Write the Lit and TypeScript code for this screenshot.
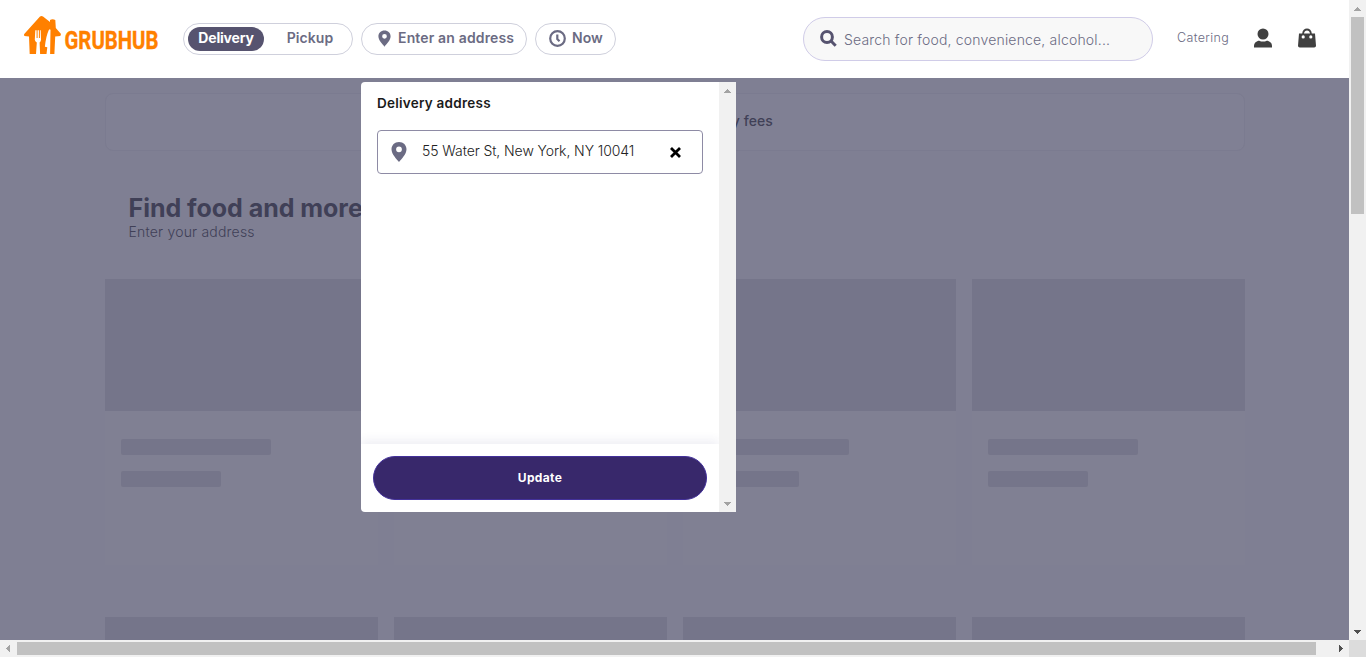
import { LitElement, html, css, svg } from "lit";
import { customElement } from "lit/decorators.js";

const pin = (cls: string) => html`<svg class=${cls} viewBox="0 0 16 20" aria-hidden="true">
  <path fill-rule="evenodd" d="M8 0C3.6 0 .5 3.2.5 7.3c0 5 5 9.700 7.500 12.700 2.500-3 7.500-7.700 7.500-12.700C15.500 3.200 12.400 0 8 0zm0 4.400a2.900 2.900 0 1 1 0 5.800 2.900 2.900 0 0 1 0-5.800z"/>
</svg>`;

const arrow = (dir: string, fill: string) => {
  const shapes: Record<string, string> = {
    up: "M5 11h7v-1h-1V9h-1V8H9V7H8v1H7v1H6v1H5z",
    down: "M5 7h7v1h-1v1h-1v1H9v1H8v-1H7V9H6V8H5z",
    left: "M10 5v7H9v-1H8v-1H7V9H6V8h1V7h1V6h1V5z",
    right: "M7 5v7h1v-1h1v-1h1V9h1V8h-1V7H9V6H8V5z",
  };
  return html`<svg class="arrow" width="17" height="17" viewBox="0 0 17 17">${svg`<path fill=${fill} d=${shapes[dir]}/>`}</svg>`;
};

@customElement("app-root")
export class AppRoot extends LitElement {
  static styles = css`
    :host { display: block; width: 1366px; height: 657px; overflow: hidden; position: relative;
      font-family: Inter, "Liberation Sans", sans-serif; background: #fff; }
    * { box-sizing: border-box; }
    svg { display: block; flex: none; }
    .window { display: grid; grid-template: 640px 17px / 1349px 17px; }
    .page { overflow: hidden; background: #7f7f93; }
    header { height: 78px; background: #fff; display: flex; align-items: center; padding: 0 32px 0 24px; color: #6b6b83; }
    .logo { width: 136px; height: 50px; margin: -3px 23px 0 0; fill: #ff8000; overflow: visible; }
    .logo-word { font: 700 26.500px Roboto, sans-serif; stroke: #ff8000; stroke-width: .4; }
    .pill { height: 32px; border: 1px solid #cfd0dc; border-radius: 16px; display: flex; align-items: center;
      font-weight: 600; font-size: 14px; line-height: 20px; margin-right: 8px; white-space: nowrap; margin-bottom: 1px; }
    .pill span { margin-top: -2px; }
    .pill .active { width: 76px; height: 24px; margin-top: 0; border-radius: 12px; background: #56536f; color: #fff; text-align: center; line-height: 22px; font-weight: 700; letter-spacing: -.2px; }
    .toggle { width: 170px; padding: 0 4px; }
    .pickup { flex: 1; text-align: center; padding-left: 8px; letter-spacing: .1px; }
    .where { width: 166px; padding-left: 16px; letter-spacing: .15px; }
    .when { width: 81px; padding-left: 14px; margin-right: 187px; }
    .pin-small { width: 13px; height: 17px; fill: #6b6b83; margin-right: 7px; }
    .clock { width: 17px; height: 17px; margin-right: 6px; margin-left: -1px; fill: none; stroke: #6b6b83; stroke-width: 2.200; }
    .search { width: 350px; height: 44px; border: 1px solid #d0cce8; border-radius: 22px; background: #f8f8f8;
      display: flex; align-items: center; padding-left: 16px; font-size: 14px; font-weight: 300; }
    .glass { width: 17px; height: 17px; margin: -1px 7px 0 0; fill: none; stroke: #56536f; stroke-width: 3; }
    .query { letter-spacing: .18px; white-space: nowrap; }
    .catering { margin: -3px 0 0 24px; width: 76px; font-size: 12.500px; font-weight: 300; letter-spacing: .35px; }
    .user { width: 20px; height: 20px; fill: #404040; margin: -2px 24px 0 0; }
    .bag { width: 20px; height: 20px; fill: #404040; margin-top: -2px; }
    .content { width: 1140px; margin: 0 0 0 105px; padding-top: 15px; color: #404057; }
    .banner { height: 58px; border-radius: 8px; background: #808094; border: 1px solid #7b7b90; display: flex;
      align-items: center; justify-content: flex-end; padding: 0 471px 3px 0; font-size: 14px; font-weight: 500; letter-spacing: .1px; }
    h1 { margin: 42px 0 0 23.500px; font-size: 25px; line-height: 31px; font-weight: 700; letter-spacing: -.03px; white-space: nowrap; }
    .sub { margin: 0 0 0 23.500px; font-size: 14px; line-height: 16px; font-weight: 300; letter-spacing: .2px; }
    .cards { display: grid; grid-template-columns: repeat(4, 273px); gap: 52px 16px; margin-top: 39px; }
    .card { height: 286px; background: #808093; }
    .photo { height: 132px; background: #75758a; margin-bottom: 28px; }
    .bar { height: 16px; width: 150px; border-radius: 2px; background: #75758a; margin: 0 0 16px 16px; }
    .short { width: 100px; }
    .vbar { background: #f1f1f1; display: flex; flex-direction: column; align-items: center; }
    .vthumb { width: 13px; height: 197px; background: #c1c1c1; }
    .hbar { background: #f1f1f1; display: flex; align-items: center; }
    .hthumb { width: 1299px; height: 13px; background: #c1c1c1; }
    .fill { flex: 1; }
    .corner { background: #dcdcdc; }
    .popup { position: absolute; left: 361px; top: 82px; width: 375px; height: 430px; display: flex; background: #fff; border-radius: 4px 0 0 4px; overflow: hidden; }
    .panel { width: 358px; display: flex; flex-direction: column; }
    .title { margin: 0; padding: 12px 16px 0; height: 48px; font-size: 13.500px; line-height: 19px; font-weight: 600; color: #1b1b1b; letter-spacing: .25px; }
    .field { width: 326px; height: 44px; margin-left: 16px; border: 1px solid #8e8ba5; border-radius: 4px; display: flex; align-items: center; padding: 0 20.500px 0 13px; }
    .pin-large { width: 16px; height: 20px; fill: #6b6b83; margin-right: 15px; }
    .address { flex: 1; font-size: 14px; font-weight: 300; color: #222; white-space: nowrap; padding-bottom: 3px; letter-spacing: -.08px; }
    .clear { width: 13px; height: 13px; stroke: #000; stroke-width: 2.800; }
    .footer { height: 68px; padding: 12px; box-shadow: 0 -3px 10px rgba(60, 50, 120, .09); }
    button { display: block; width: 334px; height: 44px; border: 1px solid #43319a; border-radius: 22px; background: #38286b; color: #fff; font: 700 12px Inter, sans-serif; letter-spacing: .35px; padding: 0 0 1px; }
  `;

  render() {
    const bone = html`<div class="card"><div class="photo"></div><div class="bar"></div><div class="bar short"></div></div>`;
    return html`
      <div class="window">
        <div class="page">
          <header>
            <svg class="logo" viewBox="24 13 136 50">
              <path d="M40 16.500 Q41.500 15.300 43 16.500 L50 22 V20 Q52.500 18.500 55.300 20 L55.800 28 L61 34 L60.300 36 L55.200 36.500 L54.400 54 H50.100 L50.500 30 Q50 28.600 48.700 30.300 Q46 36 44.900 46.800 L47.300 47.300 L46.500 54 H40.100 L39.600 42.500 Q41 41.500 41 39.800 L40.700 30.300 H39.900 V38 H38.900 V30.300 H37.600 V38 H36.600 V30.300 H35.300 L34.800 39.800 Q34.900 41.500 36.800 42.500 L36 54 H29.700 L29 36.500 L24.300 36 L24 34.300 Z"/>
              <text class="logo-word" x="64.500" y="49.300" textLength="94" lengthAdjust="spacingAndGlyphs">GRUBHUB</text>
            </svg>
            <div class="pill toggle"><span class="active">Delivery</span><span class="pickup">Pickup</span></div>
            <div class="pill where">${pin("pin-small")}<span>Enter an address</span></div>
            <div class="pill when">
              <svg class="clock" viewBox="0 0 17 17"><circle cx="8.500" cy="8.500" r="7.300"/><path d="M8.300 4.500V9l2.200 2.200"/></svg>
              <span>Now</span>
            </div>
            <div class="search">
              <svg class="glass" viewBox="0 0 17 17"><circle cx="7" cy="7" r="5.400"/><path d="M11 11l4.700 4.700"/></svg>
              <span class="query">Search for food, convenience, alcohol...</span>
            </div>
            <span class="catering">Catering</span>
            <svg class="user" viewBox="0 0 20 20"><circle cx="10" cy="6" r="5.500"/><path d="M1 19.500V18c0-3 2.500-5.300 5.300-5.300 2 1.200 5.400 1.200 7.400 0C16.500 12.700 19 15 19 18v1.500z"/></svg>
            <svg class="bag" viewBox="0 0 20 20"><path fill-rule="evenodd" d="M2 5.500h3.200C5.500 2.300 7.500.5 10 .5s4.500 1.800 4.800 5H18l1 12.200q0 1.800-1.800 1.800H2.800Q1 19.500 1 17.700zm5 0h6C12.700 3.500 11.600 2.500 10 2.500S7.300 3.500 7 5.500zM6.200 7.300a1.600 1.600 0 1 0 0 3.200 1.600 1.600 0 0 0 0-3.200zm7.600 0a1.600 1.600 0 1 0 0 3.200 1.600 1.600 0 0 0 0-3.200z"/></svg>
          </header>
          <div class="content">
            <div class="banner">delivery fees</div>
            <h1>Find food and more</h1>
            <p class="sub">Enter your address</p>
            <div class="cards">${Array.from({ length: 8 }, () => bone)}</div>
          </div>
        </div>
        <div class="vbar">${arrow("up", "#a3a3a3")}<div class="vthumb"></div><div class="fill"></div>${arrow("down", "#505050")}</div>
        <div class="hbar">${arrow("left", "#a3a3a3")}<div class="hthumb"></div><div class="fill"></div>${arrow("right", "#505050")}</div>
        <div class="corner"></div>
      </div>
      <div class="popup">
        <div class="panel">
          <h2 class="title">Delivery address</h2>
          <div class="field">${pin("pin-large")}<span class="address">55 Water St, New York, NY 10041</span>
            <svg class="clear" viewBox="0 0 13 13"><path d="M2 2l9 9M11 2l-9 9"/></svg>
          </div>
          <div class="fill"></div>
          <div class="footer"><button>Update</button></div>
        </div>
        <div class="vbar">${arrow("up", "#a3a3a3")}<div class="fill"></div>${arrow("down", "#a3a3a3")}</div>
      </div>`;
  }
}
